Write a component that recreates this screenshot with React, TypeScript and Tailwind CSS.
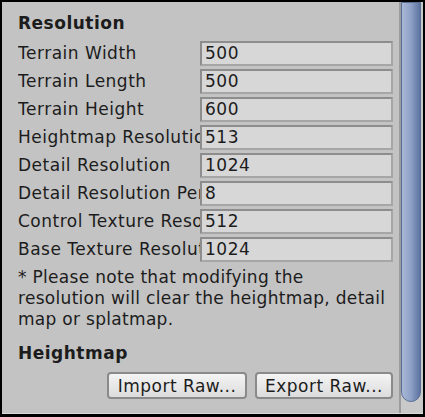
const rows = [
  { label: "Terrain Width", value: "500" },
  { label: "Terrain Length", value: "500" },
  { label: "Terrain Height", value: "600" },
  { label: "Heightmap Resolution", value: "513" },
  { label: "Detail Resolution", value: "1024" },
  { label: "Detail Resolution Per Patch", value: "8" },
  { label: "Control Texture Resolution", value: "512" },
  { label: "Base Texture Resolution", value: "1024" },
]

export default function App() {
  return (
    <div className="w-[425px] h-[417px] bg-black pt-[2px] pl-[2px] pr-[2px] pb-[3px] font-['DejaVu_Sans',sans-serif] text-[17px] tracking-[0.5px] text-[#1c1c1c]">
      <div className="flex h-full border-b border-[#dadada] bg-[#c3c3c3]">
        {/* inspector content */}
        <div className="flex-1 pl-4 pr-[6px] pt-[11px]">
          <h2 className="font-bold leading-[20px] h-[28px]">Resolution</h2>
          <div className="flex flex-col gap-[3px]">
            {rows.map((r) => (
              <div key={r.label} className="flex items-center h-[25px]">
                <div className="w-[182px] shrink-0 overflow-hidden whitespace-nowrap leading-[25px]">{r.label}</div>
                <div className="flex-1 h-[25px] border-2 border-[#8d8d8d] border-b-[#a6a6a6] border-r-[#a6a6a6] bg-[#d7d7d7] pl-[3px] leading-[21px]">
                  {r.value}
                </div>
              </div>
            ))}
          </div>
          <p className="mt-[5px] leading-[21px] whitespace-nowrap tracking-[0.3px]">
            * Please note that modifying the
            <br />
            resolution will clear the heightmap, detail
            <br />
            map or splatmap.
          </p>
          <h2 className="font-bold mt-[13px] leading-[20px]">Heightmap</h2>
          <div className="flex justify-end gap-[8px] mt-[9px]">
            <button className="w-[140px] h-[27px] rounded-[4px] border-2 border-[#8a8a8a] bg-gradient-to-b from-[#f4f4f4] to-[#dcdcdc] leading-[22px]">
              Import Raw...
            </button>
            <button className="w-[138px] h-[27px] rounded-[4px] border-2 border-[#8a8a8a] bg-gradient-to-b from-[#f4f4f4] to-[#dcdcdc] leading-[22px]">
              Export Raw...
            </button>
          </div>
        </div>
        {/* scrollbar */}
        <div className="w-[24px] border-l-2 border-[#9c9c9c] bg-[#c9c9c9] pr-[2px] pb-[11px]">
          <div className="h-full rounded-b-[10px] border border-[#5a6f96] bg-gradient-to-r from-[#a9b8d6] via-[#8da0c6] to-[#5c739f]" />
        </div>
      </div>
    </div>
  )
}
